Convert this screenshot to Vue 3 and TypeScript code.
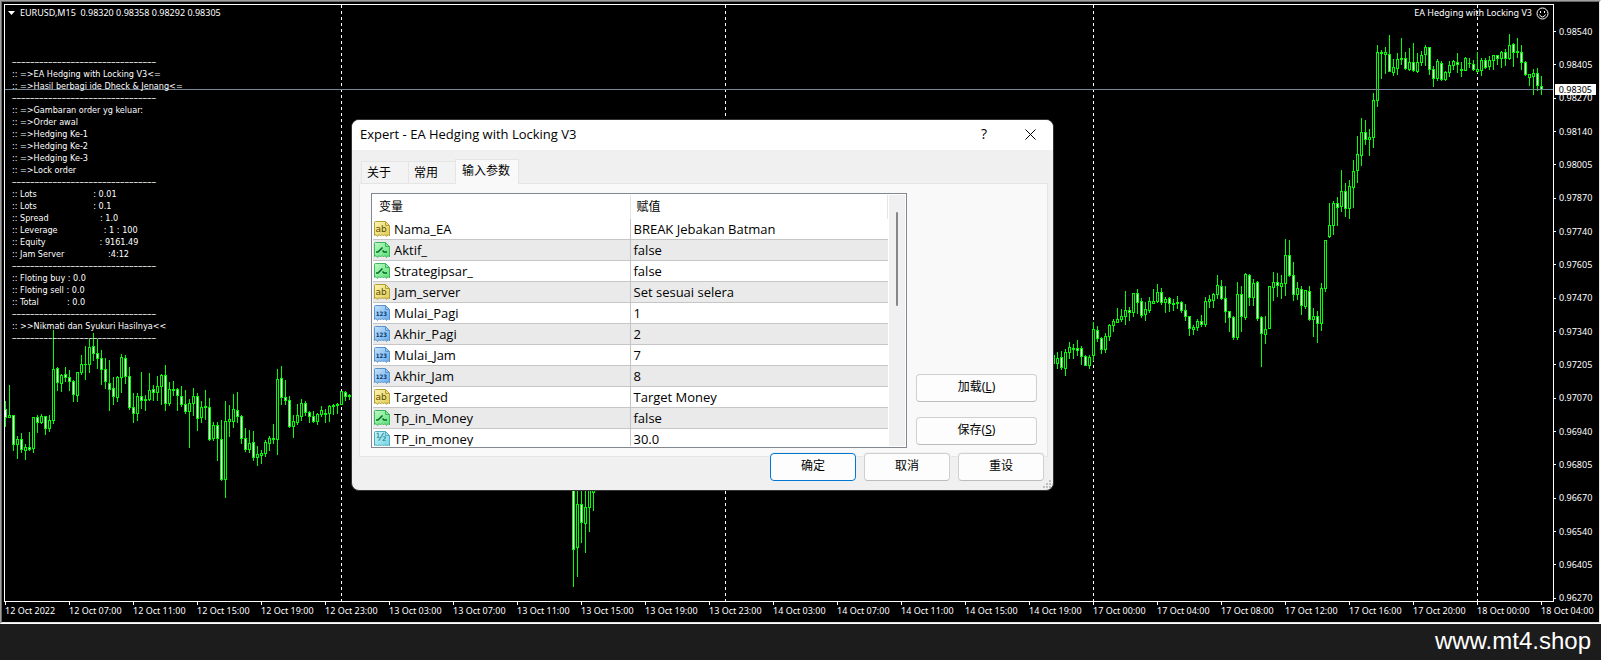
<script setup lang="ts">
import { ref } from 'vue'

interface Candle {
  x: number
  high: number
  top: number
  bottom: number
  low: number
  down: boolean
}

/* Each bar is "high top bottom low", in thirds of a pixel; a trailing f marks a falling bar. */
function series(startX: number, baseY: number, bars: string): Candle[] {
  return bars.trim().split(/\s*;\s*/).map((bar, i) => {
    const parts = bar.split(' ')
    const [high, top, bottom, low] = parts.slice(0, 4).map((v) => baseY + Math.floor(Number(v) / 3))
    return { x: startX + i * 4, high, top, bottom, low, down: parts[4] === 'f' }
  })
}

const candles: Candle[] = [
  ...series(5, 320, `243 267 292 320 f;195 286 292 292;286 286 373 392 f;350 358 373 416;339 358 389 398 f;373 381 391 419;
    336 381 389 392 f;292 292 386 398;286 292 307 338 f;282 290 307 311;290 290 325 342 f;286 301 325 335;30 148 301 311;
    141 145 187 210 f;162 166 190 213;141 163 172 184 f;150 172 184 210 f;180 184 224 243 f;157 157 227 243;105 133 157 162;
    80 132 134 177;57 82 133 156;39 79 100 120 f;57 100 115 144 f;90 115 148 192 f;114 148 185 206 f;120 190 208 270 f;
    171 205 230 252 f;168 172 232 243;102 112 172 218;106 115 169 189 f;141 169 262 267 f;219 262 280 308 f;219 229 280 302;
    156 229 242 264 f;226 237 241 272;159 211 239 242;195 208 217 242 f;168 199 217 240;162 166 199 252;136 166 250 272 f;
    186 208 250 256;184 207 210 225;204 208 227 272 f;199 229 254 258 f;210 253 275 279 f;237 250 275 383;204 229 250 287;
    220 229 295 330 f;243 262 292 308;210 259 262 298;235 262 359 362 f;307 316 356 362;307 316 356 422 f;300 358 478 480 f;
    243 304 478 531;255 298 304 350;222 268 304 322;216 270 290 308 f;285 289 356 370 f;324 356 388 395 f;331 370 388 398;
    333 367 412 422 f;378 403 412 437;391 399 406 431;361 367 400 410;350 355 370 390;312 355 359 370;148 178 358 404;
    138 175 232 254 f;180 231 241 252 f;228 241 320 322 f;285 304 320 353;252 286 307 314;237 250 289 300;243 250 278 285 f;
    273 277 290 308 f;273 290 305 308 f;279 283 305 314;258 271 283 290;269 280 282 308;256 259 281 303;252 256 259 282;
    249 253 256 281;213 214 253 253;213 216 229 242 f;222 226 230 237`),
  ...series(573, 320, `480 480 688 800 f;480 553 683 770;480 553 607 666 f;480 562 611 698;480 480 563 635;480 480 518 570`),
  ...series(1053, 230, `360 376 401 417;366 385 401 414;363 382 412 419 f;357 367 416 435;336 352 367 384;342 354 357 384;
    330 354 360 375 f;348 354 380 402 f;375 379 407 407 f;375 382 407 414;276 298 377 392;288 300 326 335 f;321 324 359 369 f;
    309 319 359 366;282 286 320 330;268 274 286 303;234 268 278 278;237 259 269 273;183 241 260 282;231 241 248 270 f;
    190 190 248 258;177 190 218 249 f;204 214 257 263 f;216 238 254 270;201 214 242 248;177 214 219 221;162 187 214 218;
    174 187 218 222 f;202 208 218 246;201 205 221 243 f;207 219 222 240;198 216 221 234;213 217 242 248 f;222 241 260 270 f;
    259 260 296 315 f;285 291 297 312;267 274 293 300;255 274 284 288 f;201 214 284 290;195 208 213 231;189 193 212 231;
    135 166 193 204;150 169 206 209 f;168 205 245 276 f;243 244 263 303 f;259 262 323 327 f;156 193 323 329;168 193 260 303 f;
    129 133 262 267;132 136 203 225 f;147 160 203 225;153 157 266 272 f;259 262 311 408 f;258 298 314 339;169 169 296 296;
    126 157 173 212;129 157 167 198 f;135 160 170 204;27 76 161 195;30 76 136 138 f;96 136 194 210 f;156 175 194 209;
    168 178 227 252 f;180 181 230 234;168 184 269 270 f;234 259 269 318;243 259 281 336 f;159 175 281 300;30 31 176 183`),
  ...series(1329, 0, `609 676 709 712;603 609 676 704;593 609 621 675 f;510 574 619 633;549 574 626 648 f;540 559 626 654;
    480 514 562 621;408 463 512 548;354 397 467 495;360 397 418 432 f;387 412 418 465;280 300 412 441;136 157 301 318;
    150 156 160 234;141 157 163 219;105 163 214 215 f;177 203 217 225;159 178 206 222;114 174 178 192;156 175 206 209 f;
    144 187 207 210;129 187 212 213 f;159 187 214 218;153 166 186 195;136 142 163 195;141 142 208 222 f;199 208 236 258 f;
    178 184 236 242;183 190 238 240 f;213 217 238 240;183 196 217 228;180 184 195 209;159 186 194 218 f;186 207 212 228 f;
    171 175 211 212;174 189 191 201;180 192 207 210 f;156 208 214 216;174 181 211 225;174 181 201 204 f;168 181 199 208;
    165 166 181 207;165 166 176 192 f;153 157 175 202;147 157 175 195 f;102 136 174 177;129 133 157 198 f;114 153 157 172;
    135 157 186 207 f;184 187 223 225 f;222 223 232 255;207 219 230 282;204 219 257 272 f;228 259 268 282 f`),
]

const separators = [341, 725, 1093, 1477]

const prices = [
  '0.98540', '0.98405', '0.98270', '0.98140', '0.98005', '0.97870', '0.97740', '0.97605', '0.97470',
  '0.97340', '0.97205', '0.97070', '0.96940', '0.96805', '0.96670', '0.96540', '0.96405', '0.96270',
]

const times = [
  '12 Oct 2022', '12 Oct 07:00', '12 Oct 11:00', '12 Oct 15:00', '12 Oct 19:00', '12 Oct 23:00',
  '13 Oct 03:00', '13 Oct 07:00', '13 Oct 11:00', '13 Oct 15:00', '13 Oct 19:00', '13 Oct 23:00',
  '14 Oct 03:00', '14 Oct 07:00', '14 Oct 11:00', '14 Oct 15:00', '14 Oct 19:00', '17 Oct 00:00',
  '17 Oct 04:00', '17 Oct 08:00', '17 Oct 12:00', '17 Oct 16:00', '17 Oct 20:00', '18 Oct 00:00', '18 Oct 04:00',
]

const rule = '–'.repeat(32)
const gap = (n: number): string => ' '.repeat(n)
const comment = [
  rule,
  ':: =>EA Hedging with Locking V3<=',
  ':: =>Hasil berbagi ide Dheck & Jenang<=',
  rule,
  ':: =>Gambaran order yg keluar:',
  ':: =>Order awal',
  ':: =>Hedging Ke-1',
  ':: =>Hedging Ke-2',
  ':: =>Hedging Ke-3',
  ':: =>Lock order',
  rule,
  `:: Lots${gap(22)}: 0.01`,
  `:: Lots${gap(22)}: 0.1`,
  `:: Spread${gap(20)}: 1.0`,
  `:: Leverage${gap(18)}: 1 : 100`,
  `:: Equity${gap(21)}: 9161.49`,
  `:: Jam Server${gap(17)}:4:12`,
  rule,
  ':: Floting buy : 0.0',
  ':: Floting sell : 0.0',
  `:: Total${gap(11)}: 0.0`,
  rule,
  ':: >>Nikmati dan Syukuri Hasilnya<<',
  rule,
]

type Kind = 'str' | 'bool' | 'int' | 'real'
interface Param {
  kind: Kind
  name: string
  value: string
}

const params: Param[] = [
  { kind: 'str', name: 'Nama_EA', value: 'BREAK Jebakan Batman' },
  { kind: 'bool', name: 'Aktif_', value: 'false' },
  { kind: 'bool', name: 'Strategipsar_', value: 'false' },
  { kind: 'str', name: 'Jam_server', value: 'Set sesuai selera' },
  { kind: 'int', name: 'Mulai_Pagi', value: '1' },
  { kind: 'int', name: 'Akhir_Pagi', value: '2' },
  { kind: 'int', name: 'Mulai_Jam', value: '7' },
  { kind: 'int', name: 'Akhir_Jam', value: '8' },
  { kind: 'str', name: 'Targeted', value: 'Target Money' },
  { kind: 'bool', name: 'Tp_in_Money', value: 'false' },
  { kind: 'real', name: 'TP_in_money', value: '30.0' },
]

const gradients: { kind: Kind; from: string; to: string }[] = [
  { kind: 'str', from: '#fcf5b4', to: '#e0ca52' },
  { kind: 'bool', from: '#bdf9c4', to: '#5be078' },
  { kind: 'int', from: '#c4e3fc', to: '#68aaea' },
  { kind: 'real', from: '#c8f5fb', to: '#74d4e4' },
]

const tabs = ['关于', '常用', '输入参数']
const active = ref(2)
</script>

<template>
  <div class="app">
    <main class="window">
      <div class="sunken">
        <section class="plot">
          <svg class="candles" viewBox="5 5 1548 596" preserveAspectRatio="none" shape-rendering="crispEdges">
            <line v-for="s in separators" :key="s" :x1="s + 0.5" :x2="s + 0.5" y1="5" y2="601" class="separator" />
            <g v-for="c in candles" :key="c.x">
              <rect :x="c.x" :y="c.high" width="1" :height="c.low - c.high + 1" class="bar" />
              <rect :x="c.x - 1" :y="c.top" width="3" :height="c.bottom - c.top + 1" class="bar" />
              <rect
                v-if="c.bottom - c.top > 1"
                :x="c.x"
                :y="c.top + 1"
                width="1"
                :height="c.bottom - c.top - 1"
                :class="c.down ? 'falling' : 'rising'"
              />
            </g>
            <rect x="5" y="89" width="1548" height="1" class="bid" />
          </svg>
          <header class="plot-head">
            <svg class="arrow" viewBox="0 0 7 4"><path d="M0 0H7L3.5 4Z" /></svg>
            <span class="symbol">EURUSD,M15&nbsp; 0.98320 0.98358 0.98292 0.98305</span>
            <span class="expert">EA Hedging with Locking V3</span>
            <svg class="smiley" viewBox="0 0 13 13">
              <circle cx="6.5" cy="6.5" r="5.5" />
              <path d="M3.5 7.5Q4.5 10 6.5 10T9.5 7.5" />
              <path d="M4.5 4V6M8.5 4V6" />
            </svg>
          </header>
          <div class="comment">
            <div v-for="(line, i) in comment" :key="i" :class="{ rule: line === rule }">{{ line }}</div>
          </div>
        </section>
        <ul class="prices">
          <li v-for="p in prices" :key="p">{{ p }}</li>
        </ul>
        <span class="bid-tag">0.98305</span>
        <ul class="times">
          <li v-for="t in times" :key="t">{{ t }}</li>
        </ul>
      </div>
    </main>

    <footer class="footer">www.mt4.shop</footer>

    <section class="dialog" role="dialog" aria-labelledby="dialog-title">
      <header class="title-bar">
        <h1 id="dialog-title">Expert - EA Hedging with Locking V3</h1>
        <button type="button" class="caption" aria-label="Help">?</button>
        <button type="button" class="caption" aria-label="Close">
          <svg class="cross" viewBox="0 0 11 11"><path d="M.5 .5L10.5 10.5M10.5 .5L.5 10.5" /></svg>
        </button>
      </header>

      <nav class="tabs" role="tablist">
        <button
          v-for="(t, i) in tabs"
          :key="t"
          type="button"
          role="tab"
          class="tab"
          :class="{ active: active === i }"
          :aria-selected="active === i"
          @click="active = i"
        >{{ t }}</button>
      </nav>

      <div class="pane">
        <div class="list">
          <div class="scroll">
            <table class="grid">
              <thead>
                <tr><th>变量</th><th>赋值</th></tr>
              </thead>
              <tbody>
                <tr v-for="p in params" :key="p.name">
                  <td>
                    <div class="name">
                      <svg class="icon" :class="p.kind" viewBox="0 0 16 16">
                        <path
                          class="sheet"
                          :fill="`url(#fill-${p.kind})`"
                          d="M.5 1.5Q.5 .5 1.5 .5H11.5L15.5 4.5V15L14 13.5L12.5 15.5L11 13.5L9.5 15L8 13.5L6.5 15L5 13.5L3.5 15.5L2 13.5L.5 14.5Z"
                        />
                        <path class="fold" d="M11.5 .5V4.5H15.5" />
                        <text v-if="p.kind === 'str'" x="7" y="11" class="glyph ab">ab</text>
                        <text v-else-if="p.kind === 'int'" x="7.5" y="11" class="glyph num">123</text>
                        <text v-else-if="p.kind === 'real'" x="7" y="10" class="glyph half">½</text>
                        <path v-else class="switch" d="M2 10H4L8.5 5.5M8.5 8.5L10 10H13" />
                      </svg>
                      <span>{{ p.name }}</span>
                    </div>
                  </td>
                  <td>{{ p.value }}</td>
                </tr>
              </tbody>
            </table>
          </div>
          <div class="track"><div class="thumb"></div></div>
        </div>
        <div class="side">
          <button type="button" class="button">加载(<u>L</u>)</button>
          <button type="button" class="button">保存(<u>S</u>)</button>
        </div>
      </div>

      <div class="actions">
        <button type="button" class="button primary">确定</button>
        <button type="button" class="button">取消</button>
        <button type="button" class="button">重设</button>
      </div>

      <svg class="grip" viewBox="0 0 8 8" shape-rendering="crispEdges">
        <path d="M6 0h2v2H6zM3 3h2v2H3zM6 3h2v2H6zM0 6h2v2H0zM3 6h2v2H3zM6 6h2v2H6z" />
      </svg>
    </section>

    <svg class="defs" aria-hidden="true">
      <linearGradient v-for="g in gradients" :id="`fill-${g.kind}`" :key="g.kind" x1="0" y1="0" x2="1" y2="1">
        <stop offset="0" :stop-color="g.from" />
        <stop offset="1" :stop-color="g.to" />
      </linearGradient>
    </svg>
  </div>
</template>

<style>
body {
  margin: 0;
  background: #1c1c1c;
}
</style>

<style scoped>
.app {
  position: relative;
  display: grid;
  grid-template-rows: 1fr 36px;
  min-height: 100vh;
  overflow: hidden;
  background: #1c1c1c;
}
.app * {
  box-sizing: border-box;
}
.window {
  display: grid;
  border: 1px solid;
  border-color: #a0a0a0 #fff #fff #a0a0a0;
}
.sunken {
  position: relative;
  display: grid;
  grid-template: minmax(598px, 1fr) 20px / minmax(0, 1fr) 45px;
  padding: 2px 0 0 2px;
  border: 1px solid;
  border-color: #696969 #e3e3e3 #e3e3e3 #696969;
  background: #000;
  color: #fff;
  font: 9px/12px "Noto Sans", "Open Sans", sans-serif;
}
.plot {
  position: relative;
  grid-area: 1 / 1;
  border: 1px solid #fff;
}
.candles {
  position: absolute;
  inset: 0;
  width: 100%;
  height: 100%;
}
.separator {
  stroke: #fff;
  stroke-dasharray: 3 3;
}
.bar {
  fill: #0f0;
}
.falling {
  fill: #fff;
}
.rising {
  fill: #000;
}
.bid {
  fill: #778899;
}
.plot-head {
  position: relative;
  display: flex;
  align-items: center;
  height: 16px;
  padding: 0 4px 0 3px;
}
.arrow {
  width: 7px;
  height: 4px;
  margin-right: 5px;
  fill: #fff;
}
.symbol {
  flex: 1;
}
.smiley {
  width: 13px;
  height: 13px;
  margin-left: 4px;
  fill: none;
  stroke: #fff;
}
.comment {
  position: relative;
  margin: 35px 0 0 7px;
  font-family: "DejaVu Sans Condensed", "DejaVu Sans", sans-serif;
  white-space: pre;
}
.rule {
  font-family: "Noto Sans", sans-serif;
}
.prices {
  grid-area: 1 / 2 / 3 / 3;
  display: grid;
  grid-auto-rows: 1fr;
  margin: 0;
  padding: 11px 0 7px;
  list-style: none;
}
.prices li {
  display: flex;
  align-items: center;
  gap: 3px;
}
.prices li::before {
  content: "";
  width: 2px;
  height: 1px;
  background: #fff;
}
.bid-tag {
  position: absolute;
  top: 82px;
  right: 3px;
  padding: 0 4px;
  background: #fff;
  color: #000;
  line-height: 11px;
}
.times {
  grid-area: 2 / 1;
  display: grid;
  grid-template-columns: repeat(24, minmax(0, 64fr)) minmax(0, 13fr);
  margin: 0;
  padding: 0 0 0 1px;
  list-style: none;
  white-space: nowrap;
}
.times li::before {
  content: "";
  display: block;
  width: 1px;
  height: 3px;
  background: #fff;
}
.footer {
  padding-right: 10px;
  background: #1c1c1c;
  color: #fff;
  font: 24px/34px "Liberation Sans", Arial, sans-serif;
  text-align: right;
}

.dialog {
  position: absolute;
  top: 119px;
  left: 351px;
  display: flex;
  flex-direction: column;
  width: 703px;
  height: 372px;
  overflow: hidden;
  border: 1px solid #333;
  border-radius: 8px;
  background: #f0f0f0;
  color: #000;
  font: 12px/16px "Noto Sans", "Noto Sans CJK SC", sans-serif;
}
.title-bar {
  display: flex;
  align-items: center;
  height: 30px;
  padding: 0 0 2px 8px;
  background: #fff;
}
.title-bar h1 {
  flex: 1;
  margin: 0;
  font: 13px/20px "Open Sans", "Noto Sans", sans-serif;
}
.caption {
  display: grid;
  place-items: center;
  width: 46px;
  height: 28px;
  padding: 0;
  border: 0;
  background: none;
  color: #000;
  font: 14px/20px "Open Sans", "Noto Sans", sans-serif;
}
.cross {
  width: 11px;
  height: 11px;
  stroke: #000;
}
.tabs {
  display: flex;
  align-items: flex-end;
  height: 33px;
  padding-left: 9px;
}
.tab {
  width: 47px;
  height: 22px;
  padding: 0 5px;
  border: 1px solid #e5e5e5;
  border-width: 1px 0 0 1px;
  background: #f3f3f3;
  color: #000;
  font: inherit;
  text-align: left;
}
.tab.active {
  z-index: 1;
  width: 64px;
  height: 25px;
  margin-bottom: -1px;
  padding: 0 6px 2px;
  border-width: 1px 1px 0;
  background: #f9f9f9;
}
.pane {
  display: flex;
  gap: 9px;
  flex: 1;
  min-height: 0;
  margin: 0 5px 0 7px;
  padding: 9px 10px 8px 11px;
  border: 1px solid #e5e5e5;
  background: #f9f9f9;
}
.list {
  display: flex;
  flex: 1;
  min-width: 0;
  padding: 1px;
  border: 1px solid #828790;
  background: #fff;
}
.scroll {
  flex: 1;
  min-width: 0;
  overflow: hidden;
}
.grid {
  width: 100%;
  border-spacing: 0;
  table-layout: fixed;
}
.grid th {
  height: 24px;
  padding: 0 6px;
  border-right: 1px solid #e5e5e5;
  font-weight: 400;
  text-align: left;
}
.grid td {
  height: 21px;
  padding: 0 3px;
  border-bottom: 1px solid #c6c6c6;
  font: 13px/18px "Open Sans", "Noto Sans", sans-serif;
}
.grid td:first-child {
  padding: 0 1px;
  border-right: 1px solid #c6c6c6;
}
.grid tbody tr:nth-child(even) {
  background: #eaeaea;
}
.name {
  display: flex;
  align-items: center;
  gap: 4px;
}
.track {
  width: 16px;
  margin-left: 1px;
  padding: 17px 7px 0;
  background: #f0f0f0;
}
.thumb {
  height: 94px;
  border-radius: 1px;
  background: #868686;
}
.icon {
  width: 16px;
  height: 16px;
}
.fold,
.switch {
  fill: none;
}
.glyph {
  font-family: "DejaVu Sans", sans-serif;
  text-anchor: middle;
}
.ab {
  font-size: 9px;
}
.num {
  font-family: "DejaVu Sans Condensed", "DejaVu Sans", sans-serif;
  font-size: 6px;
  font-weight: 700;
}
.half {
  font-size: 11px;
}
.str {
  stroke: #b39f35;
}
.bool {
  stroke: #3fb45c;
}
.int {
  stroke: #5b93cc;
}
.real {
  stroke: #4eacbc;
}
.str .glyph {
  stroke: none;
  fill: #5c4e00;
}
.int .glyph {
  stroke: none;
  fill: #083a70;
}
.real .glyph {
  stroke: none;
  fill: #14707f;
}
.switch {
  stroke: #066b25;
  stroke-width: 1.5;
}
.side {
  display: flex;
  flex-direction: column;
  justify-content: flex-end;
  gap: 15px;
  width: 121px;
  padding-bottom: 3px;
}
.button {
  height: 28px;
  padding: 0 0 2px;
  border: 1px solid #d0d0d0;
  border-bottom-color: #bcbcbc;
  border-radius: 4px;
  background: #fdfdfd;
  color: #000;
  font: inherit;
}
.actions {
  display: flex;
  justify-content: flex-end;
  gap: 8px;
  margin-top: -4px;
  padding: 0 9px 9px;
}
.actions .button {
  width: 86px;
  box-shadow: 0 0 0 1px #f0f0f0;
}
.actions .primary {
  border-color: #0078d4;
}
.grip {
  position: absolute;
  right: 2px;
  bottom: 2px;
  width: 8px;
  height: 8px;
  fill: #bfbfbf;
}
.defs {
  position: absolute;
  width: 0;
  height: 0;
}
</style>
